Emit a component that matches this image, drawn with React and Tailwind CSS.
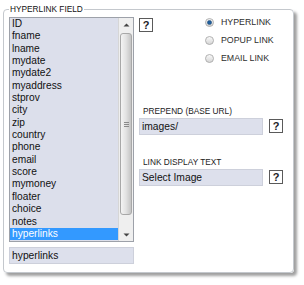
import React from "react";

const items = [
  "ID","fname","lname","mydate","mydate2","myaddress","stprov","city","zip",
  "country","phone","email","score","mymoney","floater","choice","notes","hyperlinks",
];

function Help() {
  return (
    <div className="w-[14px] h-[14px] border border-[#5a5a5a] bg-white flex items-center justify-center text-[11px] font-bold leading-none text-[#1c1c28] shrink-0">
      ?
    </div>
  );
}

function Radio({ checked, label, id }) {
  return (
    <div className="flex items-center h-[9px] gap-[7px]">
      <svg width="9" height="9" viewBox="0 0 9 9" className="shrink-0">
        <defs>
          <linearGradient id={id} x1="0" y1="0" x2="0" y2="1">
            <stop offset="0" stopColor="#fbfbfb" />
            <stop offset="1" stopColor="#d4d4d4" />
          </linearGradient>
        </defs>
        <circle cx="4.5" cy="4.5" r="4" fill={"url(#" + id + ")"} stroke="#a9a9a9" strokeWidth="0.9" />
        {checked && <circle cx="4.5" cy="4.5" r="2.1" fill="#1f5f9e" stroke="#17406a" strokeWidth="0.5" />}
      </svg>
      <span className="text-[8.8px] leading-none text-[#2e2e2e]">{label}</span>
    </div>
  );
}

export default function App() {
  return (
    <div
      className="w-[304px] h-[285px] bg-white pl-[3px] pt-[4px]"
      style={{ fontFamily: '"Liberation Sans", Arial, sans-serif' }}
    >
      <fieldset className="w-[291px] h-[269px] border border-[#c4c8cd] rounded-[4px] bg-white pl-[5px] pt-[3px] shadow-[3px_3px_3px_rgba(0,0,0,0.38)]">
        <legend className="px-[1px] text-[8.3px] leading-[10px] text-[#111]">HYPERLINK FIELD</legend>
        <div className="flex">
          <div className="w-[125px] flex flex-col">
            <div className="h-[225px] border border-[#9da1a9] bg-[#dcdfeb] flex overflow-hidden">
              <div className="flex-1 flex flex-col">
                {items.map((it) => (
                  <div
                    key={it}
                    className={
                      "h-[12.35px] leading-[12.35px] pl-[2px] text-[10.2px] whitespace-nowrap " +
                      (it === "hyperlinks" ? "bg-[#3399ff] text-white" : "text-[#111]")
                    }
                  >
                    {it}
                  </div>
                ))}
              </div>
              <div className="w-[15px] bg-[#efefef] border-l border-[#d6d6d6] flex flex-col">
                <div className="h-[13px] flex items-center justify-center">
                  <svg width="7" height="4" viewBox="0 0 7 4"><path d="M0.5 3.5 L3.5 0.5 L6.5 3.5 Z" fill="#444" /></svg>
                </div>
                <div className="flex-1 px-[1px] pt-[2px]">
                  <div className="h-[182px] rounded-[3px] border border-[#a8a8a8] bg-[linear-gradient(to_right,#f4f4f4,#e2e2e2_50%,#c4c4c4)] flex items-center justify-center">
                    <div className="flex flex-col gap-[1px]">
                      <div className="w-[5px] h-[1px] bg-[#8a8a8a]" />
                      <div className="w-[5px] h-[1px] bg-[#8a8a8a]" />
                      <div className="w-[5px] h-[1px] bg-[#8a8a8a]" />
                    </div>
                  </div>
                </div>
                <div className="h-[13px] flex items-center justify-center">
                  <svg width="7" height="4" viewBox="0 0 7 4"><path d="M0.5 0.5 L3.5 3.5 L6.5 0.5 Z" fill="#444" /></svg>
                </div>
              </div>
            </div>
            <div className="mt-[5px] h-[17px] border border-[#cdd0db] bg-[#dde0ec] pl-[2px] flex items-center text-[10.3px] text-[#111]">
              hyperlinks
            </div>
          </div>

          <div className="ml-[5px] flex-1 flex flex-col">
            <div className="flex items-start">
              <div className="mt-[1px]"><Help /></div>
              <div className="ml-[52px] mt-[1px] flex flex-col gap-[9px]">
                <Radio checked id="rg1" label="HYPERLINK" />
                <Radio id="rg2" label="POPUP LINK" />
                <Radio id="rg3" label="EMAIL LINK" />
              </div>
            </div>

            <div className="mt-[43px] pl-[4px] text-[8.3px] leading-[10px] text-[#222]">PREPEND (BASE URL)</div>
            <div className="mt-[2px] flex items-start gap-[6px]">
              <div className="w-[124px] h-[17px] border border-[#cdd0db] bg-[#dde0ec] pl-[2px] flex items-center text-[10.3px] text-[#111]">
                images/
              </div>
              <div className="mt-[1px]"><Help /></div>
            </div>

            <div className="mt-[22px] pl-[4px] text-[8.3px] leading-[10px] text-[#222]">LINK DISPLAY TEXT</div>
            <div className="mt-[2px] flex items-start gap-[6px]">
              <div className="w-[124px] h-[17px] border border-[#cdd0db] bg-[#dde0ec] pl-[2px] flex items-center text-[10.3px] text-[#111]">
                Select Image
              </div>
              <div className="mt-[1px]"><Help /></div>
            </div>
          </div>
        </div>
      </fieldset>
    </div>
  );
}
